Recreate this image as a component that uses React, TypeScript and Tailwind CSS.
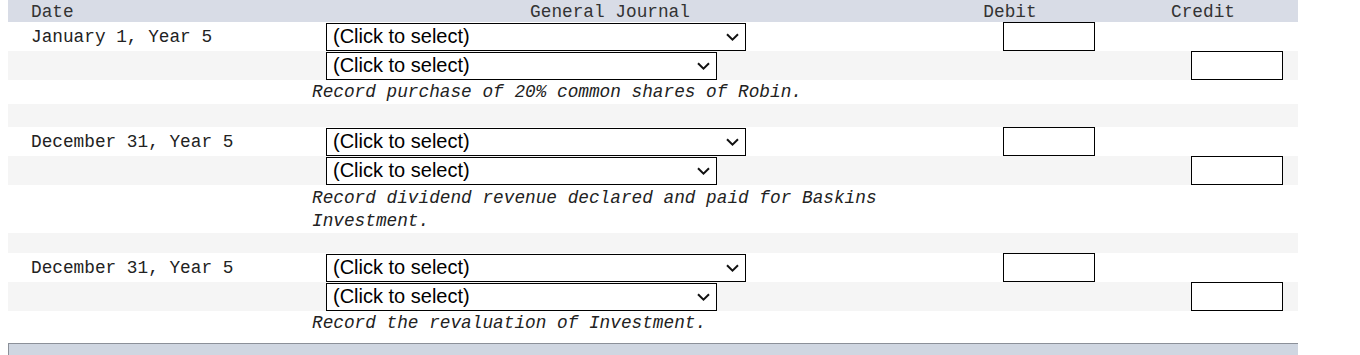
import React from 'react'

const mono = "font-['Liberation_Mono','DejaVu_Sans_Mono',monospace]"

const Chevron = () => (
  <svg width="13" height="8" viewBox="0 0 13 8" className="shrink-0">
    <path d="M1 1.2 L6.5 6.6 L12 1.2" fill="none" stroke="#111" strokeWidth="2" />
  </svg>
)

const Picker = ({ wide }: { wide?: boolean }) => (
  <div
    className={`flex h-[28px] items-center justify-between border border-black bg-white pl-[6px] pr-[6px] font-['Liberation_Sans',Arial,sans-serif] text-[20px] leading-none text-black ${
      wide ? 'w-[420px]' : 'w-[391px]'
    }`}
  >
    <span className="-mt-[1px]">(Click to select)</span>
    <Chevron />
  </div>
)

const Box = () => <div className="h-[29px] w-[92px] border border-black bg-white" />

type Entry = { date: string; note: string; twoLine?: boolean }

const entries: Entry[] = [
  { date: 'January 1, Year 5', note: 'Record purchase of 20% common shares of Robin.' },
  {
    date: 'December 31, Year 5',
    note: 'Record dividend revenue declared and paid for Baskins Investment.',
    twoLine: true,
  },
  { date: 'December 31, Year 5', note: 'Record the revaluation of Investment.' },
]

const JournalEntry = ({ entry, last }: { entry: Entry; last?: boolean }) => (
  <>
    <div className="flex h-[29px] items-center bg-white">
      <div className="w-[296px] pl-[23px] pt-[2px]">{entry.date}</div>
      <div className="w-[612px] pl-[22px]">
        <Picker wide />
      </div>
      <div className="flex w-[188px] justify-end pr-[9px]">
        <Box />
      </div>
      <div className="w-[194px]" />
    </div>
    <div className="flex h-[29px] items-center bg-[#f5f5f5]">
      <div className="w-[296px]" />
      <div className="w-[612px] pl-[22px]">
        <Picker />
      </div>
      <div className="w-[188px]" />
      <div className="flex w-[194px] justify-end pr-[15px]">
        <Box />
      </div>
    </div>
    <div className="flex bg-white">
      <div className="w-[296px]" />
      <div className={`w-[612px] pl-[8px] italic leading-[23px] ${entry.twoLine ? 'pt-[2px]' : 'pt-[1px]'}`}>
        {entry.note}
      </div>
    </div>
    {!last && <div className={`bg-[#f5f5f5] ${entry.twoLine ? 'h-[20px]' : 'h-[23px]'}`} />}
  </>
)

export default function App() {
  return (
    <div className="h-[355px] w-[1360px] overflow-hidden bg-white">
      <div className={`ml-[8px] w-[1290px] text-[17.75px] text-[#222] ${mono}`}>
        <div className="flex h-[22px] items-center bg-[#d8dce6] pt-[2px] text-[#333]">
          <div className="w-[296px] pl-[23px]">Date</div>
          <div className="w-[612px] text-center">General Journal</div>
          <div className="w-[188px] text-center">Debit</div>
          <div className="w-[194px] pl-[4px] text-center">Credit</div>
        </div>
        {entries.map((e, i) => (
          <JournalEntry key={i} entry={e} last={i === entries.length - 1} />
        ))}
        <div className="mt-[8px] h-[14px] border-l border-t border-[#8b9099] bg-[#cfd6e1]" />
      </div>
    </div>
  )
}
